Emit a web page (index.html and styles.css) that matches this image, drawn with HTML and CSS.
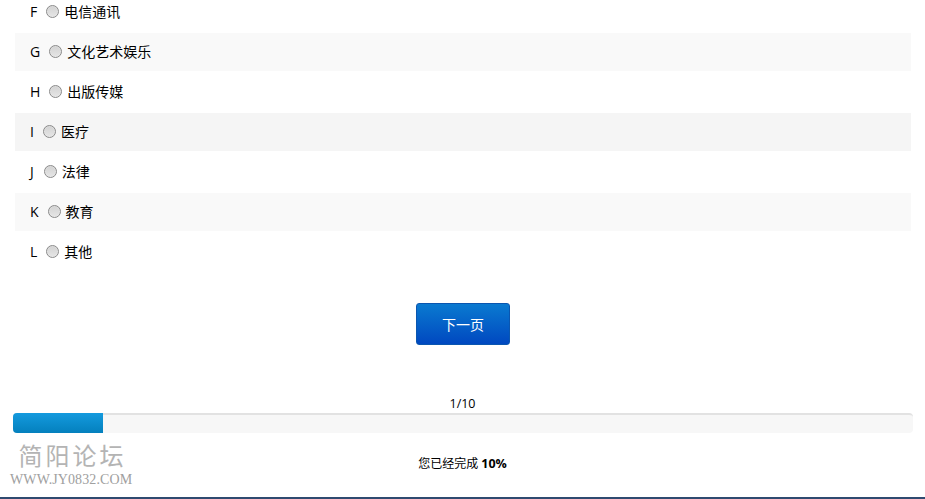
FILE: index.html
```html
<!DOCTYPE html>
<html lang="zh">
<head>
<meta charset="utf-8">
<title>下一页</title>
<link rel="stylesheet" href="styles.css">
</head>
<body>
<main class="page">
  <ul class="options">
    <li class="option"><span class="key">F</span><span class="radio"></span><span class="text">电信通讯</span></li>
    <li class="option alt"><span class="key">G</span><span class="radio"></span><span class="text">文化艺术娱乐</span></li>
    <li class="option"><span class="key">H</span><span class="radio"></span><span class="text">出版传媒</span></li>
    <li class="option hover"><span class="key">I</span><span class="radio"></span><span class="text">医疗</span></li>
    <li class="option"><span class="key key-wide">J</span><span class="radio"></span><span class="text">法律</span></li>
    <li class="option alt"><span class="key">K</span><span class="radio"></span><span class="text">教育</span></li>
    <li class="option"><span class="key">L</span><span class="radio"></span><span class="text">其他</span></li>
  </ul>
  <div class="actions"><button class="next" type="button">下一页</button></div>
  <div class="progress-label">1/10</div>
  <div class="progress"><div class="progress-bar"></div></div>
  <p class="done">您已经完成 <b>10%</b></p>
</main>
<div class="watermark">
  <div class="wm-title">简阳论坛</div>
  <div class="wm-url">WWW.JY0832.COM</div>
</div>
</body>
</html>
```
FILE: styles.css
```css
* { box-sizing: border-box; }
html, body { margin: 0; height: 499px; overflow: hidden; background: #fff; }
body {
  position: relative;
  font-family: "Open Sans", "Noto Sans CJK SC", sans-serif;
  font-size: 13px;
  color: #000;
  border-bottom: 2px solid #2f4a70;
}
.page { margin-top: -7px; padding: 0 12px 0 13px; }
.options { list-style: none; margin: 0; padding: 0 2px; display: flex; flex-direction: column; gap: 2px; }
.option { height: 38px; display: flex; align-items: center; padding-left: 15px; }
.alt { background: #f9f9f9; }
.hover { background: #f5f5f5; }
.key { font-size: 14px; line-height: 18px; margin: -1px 9px 0 0; }
.key-wide { margin-right: 10px; }
.radio {
  width: 13px; height: 13px; border-radius: 50%;
  border: 1px solid #8a8a8a;
  background: linear-gradient(#d2d2d2, #e6e6e6);
  box-shadow: inset 0 0 1px #fff;
  margin: -1px 5px 0 0;
}
.text { font-size: 14px; line-height: 18px; margin-top: -1px; }
.actions { display: flex; justify-content: center; margin-top: 32px; }
.next {
  width: 94px; height: 42px;
  border: 1px solid #0a56b0;
  border-radius: 3px;
  background: linear-gradient(#0a7ad0, #0048c0);
  color: #fff;
  font: 14px "Open Sans", "Noto Sans CJK SC", sans-serif;
}
.progress-label { margin-top: 50px; text-align: center; font-size: 12.5px; line-height: 17px; height: 18px; padding-right: 1px; }
.progress {
  height: 20px;
  background: #f7f7f7;
  border-top: 2px solid #e2e2e2;
  border-radius: 4px;
}
.progress-bar {
  width: 90px; height: 20px; margin-top: -2px;
  background: linear-gradient(#149ade, #0480bd);
  border-radius: 4px 0 0 4px;
}
.done { margin: 22px 0 0; text-align: center; font-size: 12px; line-height: 17px; padding-right: 1px; }
.done b { font-size: 12.5px; }
.watermark { position: absolute; left: 10px; top: 442px; width: 122px; color: #b4b4b4; text-align: center; }
.wm-title { font: 24px/26px "Noto Sans CJK SC", sans-serif; letter-spacing: 3px; white-space: nowrap; height: 26px; padding-left: 3px; }
.wm-url { font: 14px/16px "Liberation Serif", serif; letter-spacing: .1px; color: #a0a0a0; white-space: nowrap; margin-top: 4px; }
```
